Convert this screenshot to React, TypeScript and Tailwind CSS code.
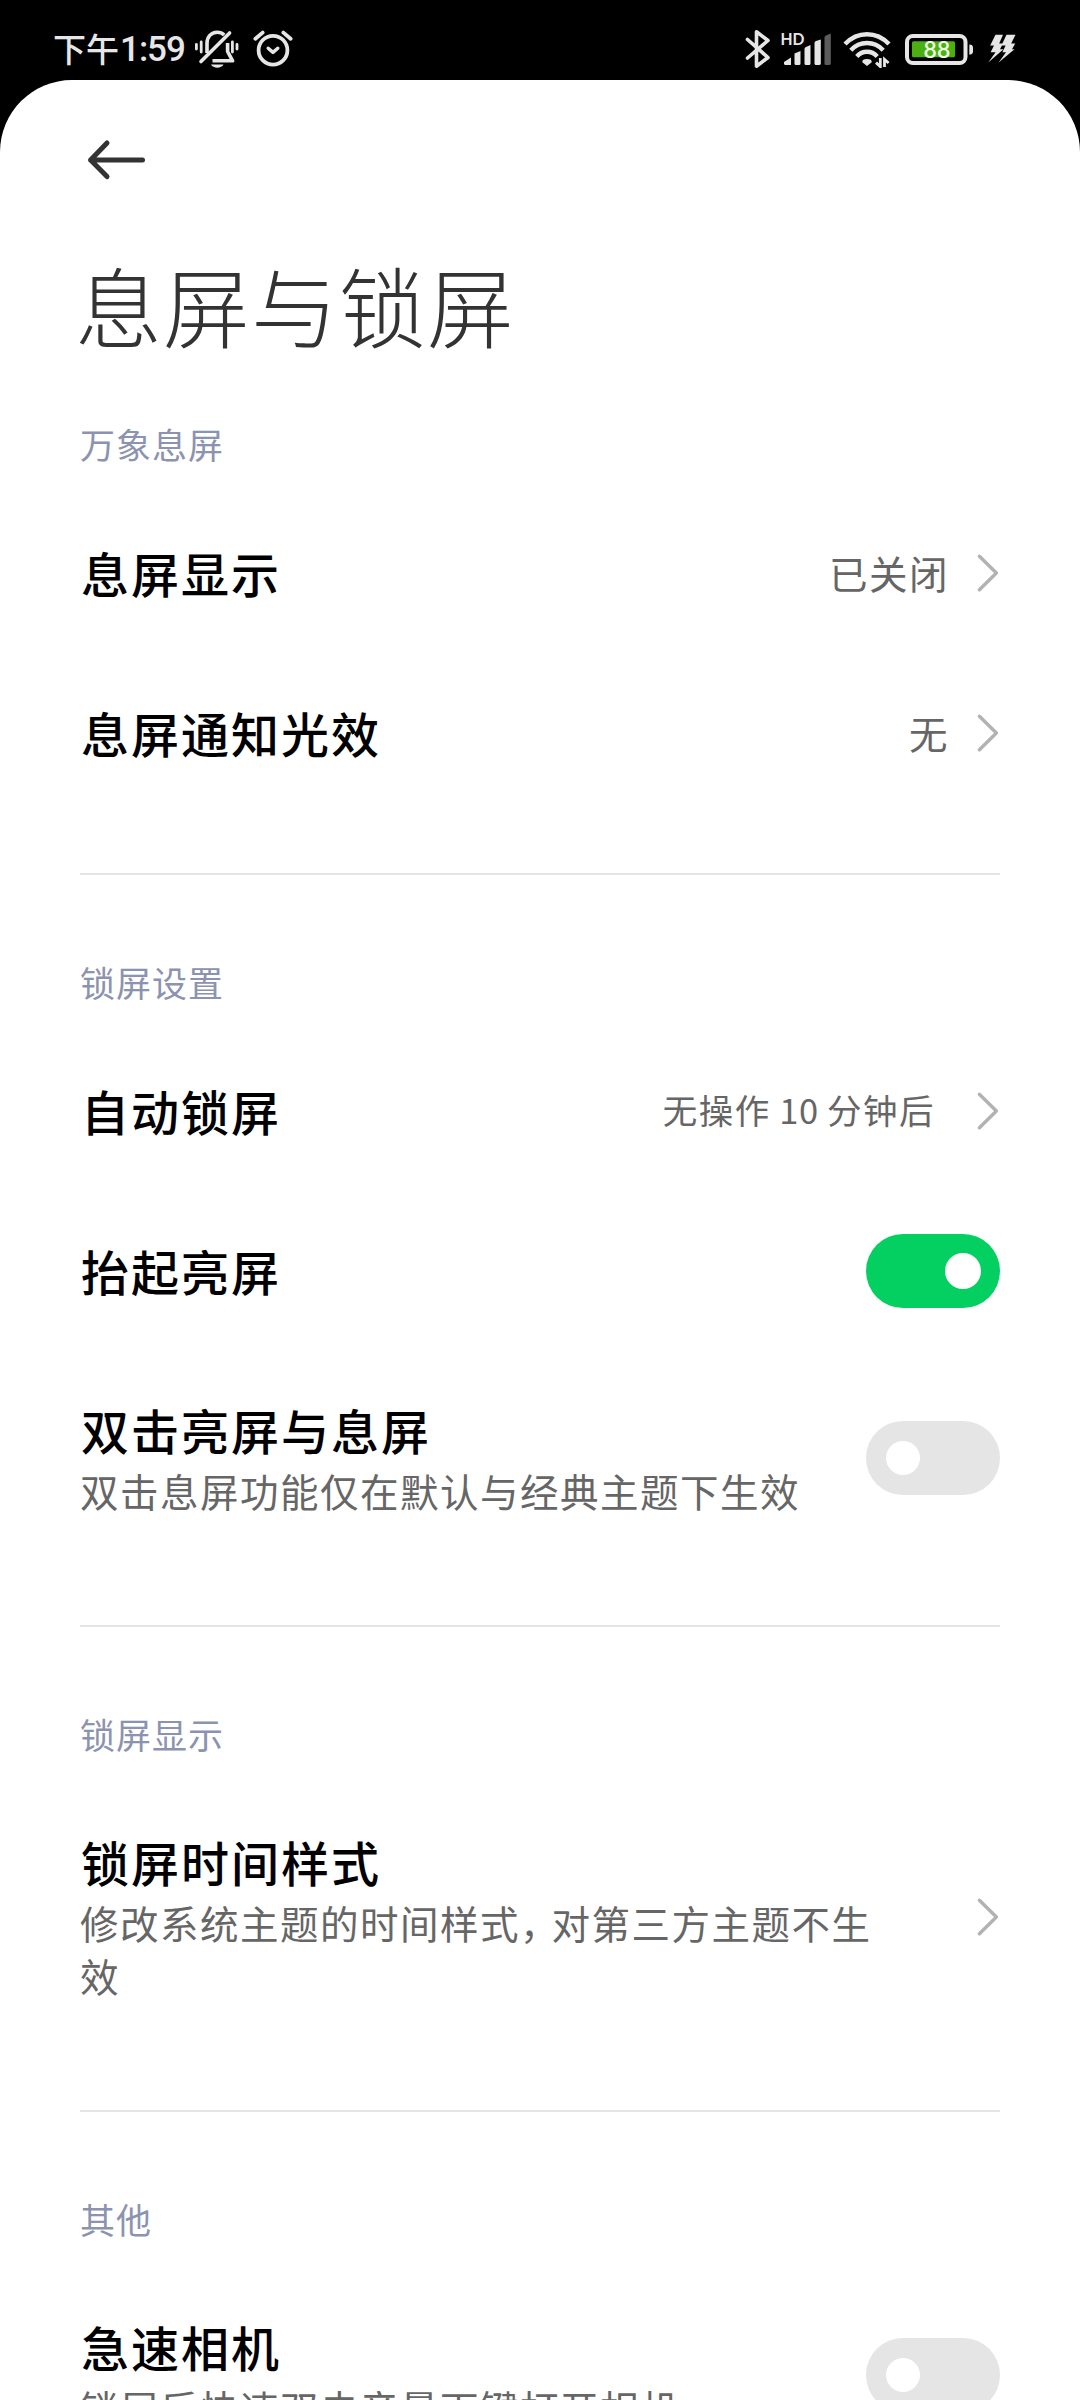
import type { ReactNode } from "react";

function BellOff() {
  return (
    <svg width="46" height="40" viewBox="0 0 46 40" fill="none" stroke="#e6e6e6" strokeWidth="3.6" strokeLinecap="round" className="shrink-0">
      <path d="M13 24V14.5C13 8 17 3.2 23.2 3.2C26.2 3.2 28.4 4.2 30.2 6" strokeLinecap="butt" />
      <path d="M35.6 4L7 32.5" />
      <path d="M33.6 14v8.5L38.6 31.8H18.5" strokeLinecap="butt" strokeLinejoin="round" />
      <path d="M17 35.6H29.5C27.5 39.8 19 39.8 17 35.6Z" fill="#e6e6e6" stroke="none" />
      <path d="M2.4 15.5v4.5M7.2 13v10M38.4 13v10M43 15.5v4.5" strokeWidth="2.8" />
    </svg>
  );
}

function Alarm() {
  return (
    <svg width="40" height="38" viewBox="0 0 40 38" fill="none" stroke="#e6e6e6" strokeLinecap="round" strokeLinejoin="round" className="shrink-0">
      <circle cx="20" cy="21.2" r="14.4" strokeWidth="3.8" />
      <path d="M2.4 9.8L9.6 3.6M37.6 9.8L30.4 3.6" strokeWidth="3.8" />
      <path d="M15.2 19.2L20 23.4L24.8 19.2" strokeWidth="3.4" />
    </svg>
  );
}

function Bluetooth() {
  return (
    <svg width="26" height="40" viewBox="0 0 26 40" fill="none" stroke="#e6e6e6" strokeWidth="3.6" strokeLinecap="round" strokeLinejoin="round" className="shrink-0">
      <path d="M2.5 10.5L23 28.5L11.5 37.2V2.8L23 11.5L2.5 29" />
    </svg>
  );
}

function Signal() {
  return (
    <svg width="52" height="34" viewBox="0 0 52 34" fill="#e6e6e6" className="shrink-0 overflow-visible">
      <text x="-0.5" y="13" fontSize="16.8" fontWeight="700" textLength="24" lengthAdjust="spacingAndGlyphs" fontFamily="Lato, sans-serif">HD</text>
      <path d="M3 30L10 25.5V33H4.5Q3 33 3 31.5Z" />
      <path d="M13.5 21.5L19.5 19V31.5Q19.5 33 18 33H15Q13.5 33 13.5 31.5Z" />
      <path d="M23.5 17Q23.5 15.6 25 15L29.5 13V31.5Q29.5 33 28 33H25Q23.5 33 23.5 31.5Z" />
      <path d="M33.5 11Q33.5 9.6 35 9L39.8 7.5V31.5Q39.8 33 38 33H35Q33.5 33 33.5 31.5Z" />
      <path d="M43.5 5.5Q43.5 4 45 3.4L49.8 1.5V31.5Q49.8 33 48 33H45Q43.5 33 43.5 31.5Z" fill="#5c5c5c" />
    </svg>
  );
}

function Wifi() {
  return (
    <svg width="48" height="38" viewBox="0 0 48 38" fill="none" stroke="#e6e6e6" strokeWidth="4.4" className="shrink-0">
      <path d="M2 14Q11.5 4.2 24 4.2T46 14" />
      <path d="M7.8 20.2Q14.5 13 24 13T40.2 20.2" />
      <path d="M13.8 26.4Q18 21.8 24 21.8T34.2 26.4" />
      <path d="M19.3 32.2Q19 29 24 29T28.7 32.2L24 36Z" fill="#e6e6e6" stroke="none" />
      <path d="M37.3 28V36.6L33 32.6M41.5 37V29.4L45.6 33" strokeWidth="2.8" />
    </svg>
  );
}

function Battery() {
  return (
    <svg width="70" height="32" viewBox="0 0 70 32" fill="none" className="shrink-0">
      <rect x="2" y="2" width="58.5" height="27" rx="6" stroke="#e6e6e6" strokeWidth="4" />
      <rect x="7" y="7.2" width="43" height="16" rx="1.5" fill="#4cb012" />
      <path d="M64.3 10.5Q68 10.5 68 13.5V17.5Q68 20.6 64.3 20.6Z" fill="#e6e6e6" />
      <text x="18.6" y="24.2" fontSize="23.4" fontWeight="600" textLength="26.6" lengthAdjust="spacingAndGlyphs" fill="#eefbe4" fontFamily="Lato, sans-serif">88</text>
    </svg>
  );
}

function Bolts() {
  return (
    <svg width="30" height="30" viewBox="0 0 30 30" fill="#e6e6e6" className="shrink-0">
      <path d="M8.5 0.8H16L12.2 9.6H16L13 15.2H16.5L1.2 28.6L8.6 18.2H3.6L7 11.6H3.2Z" />
      <path d="M19.5 0.8H28.5L24.2 9.6H28.2L25 15.2H27.5L11.6 28.6L19 18.2H15.4L18.6 11.6H14.4Z" />
    </svg>
  );
}

function Chevron() {
  return (
    <svg width="24" height="40" viewBox="0 0 24 40" fill="none" stroke="#b2b2b2" strokeWidth="3.4" strokeLinecap="round" strokeLinejoin="round" className="shrink-0">
      <path d="M3.4 3.2L20.4 20L3.4 36.8" />
    </svg>
  );
}

function Toggle({ on = false }: { on?: boolean }) {
  return on ? (
    <span role="switch" aria-checked="true" className="flex h-[74px] w-[134px] shrink-0 items-center justify-end rounded-full bg-[#04d062] pr-[19px]">
      <span className="size-9 rounded-full bg-white" />
    </span>
  ) : (
    <span role="switch" aria-checked="false" className="flex h-[74px] w-[134px] shrink-0 items-center rounded-full bg-[#e5e5e5] pl-5">
      <span className="size-[34px] rounded-full bg-white" />
    </span>
  );
}

function Section({ label, children }: { label: string; children: ReactNode }) {
  return (
    <section className="border-b-2 border-[#e5e5e5] pb-[60px] last:border-b-0">
      <h2 className="h-[156px] pt-[82px] text-[35px] leading-[50px] tracking-[1px] text-[#8c93b0]">{label}</h2>
      {children}
    </section>
  );
}

function Row({ title, note, value, children }: { title: string; note?: ReactNode; value?: ReactNode; children: ReactNode }) {
  return (
    <div className={note ? "flex items-center" : "flex h-40 items-center"}>
      <div className={note ? "min-w-0 flex-1 pt-[45px] pb-[48px]" : "min-w-0 flex-1 pb-[2px]"}>
        <h3 className="pl-[1px] text-[48px] leading-[67px] font-medium tracking-[2px] text-black">{title}</h3>
        {note && <p className="mt-[1px] max-w-[800px] text-[38.5px] leading-[53px] tracking-[1.5px] text-[#666]">{note}</p>}
      </div>
      {value}
      {children}
    </div>
  );
}

function Value({ children }: { children: ReactNode }) {
  return <span className="mr-[27px] pb-[1px] text-[38.5px] tracking-[1.5px] text-[#666]">{children}</span>;
}

export default function App() {
  return (
    <div className="h-[2400px] w-[1080px] overflow-hidden bg-black font-['Noto_Sans_CJK_SC',sans-serif]">
      <header className="flex h-20 items-start justify-between text-[#e6e6e6]">
        <div className="flex pt-[29px] pl-[53px]">
          <span className="flex h-10 w-[140px] items-center leading-10 font-medium whitespace-nowrap">
            <span className="w-[67px] pb-[2px] text-[33px]">下午</span>
            <span className="pt-[2px] font-['Roboto','Noto_Sans_CJK_SC',sans-serif] text-[35px] tracking-[-1px]">1:59</span>
          </span>
          <span className="ml-[1px]"><BellOff /></span>
          <span className="ml-[13px]"><Alarm /></span>
        </div>
        <div className="flex pt-[29px] pr-[63px]">
          <span className="mr-[10px]"><Bluetooth /></span>
          <span className="mt-[3px] mr-[10px]"><Signal /></span>
          <span className="mt-[1px] mr-[14px]"><Wifi /></span>
          <span className="mt-[5px] mr-[12px]"><Battery /></span>
          <span className="mt-[5px]"><Bolts /></span>
        </div>
      </header>

      <main className="h-[2320px] rounded-t-[72px] bg-white px-20">
        <nav className="flex h-40 items-center pl-[7px]">
          <svg width="60" height="42" viewBox="0 0 60 42" fill="none" stroke="#333" strokeWidth="5" strokeLinecap="round" strokeLinejoin="round">
            <path d="M20 4L3.6 21L20 37.6M3.6 21H55.5" />
          </svg>
        </nav>
        <h1 className="-ml-[5px] h-[97px] text-[87px] leading-[128px] font-light tracking-[1px] whitespace-nowrap text-[#333]">息屏与锁屏</h1>
        <Section label="万象息屏">
          <Row title="息屏显示" value={<Value>已关闭</Value>}><Chevron /></Row>
          <Row title="息屏通知光效" value={<Value>无</Value>}><Chevron /></Row>
        </Section>
        <Section label="锁屏设置">
          <Row
            title="自动锁屏"
            value={
              <span className="mr-[41px] pb-[2px] text-[34.5px] tracking-[1.5px] text-[#666]">
                无操作<span className="tracking-[0.6px]"> 10 </span>分钟后
              </span>
            }
          >
            <Chevron />
          </Row>
          <Row title="抬起亮屏"><Toggle on /></Row>
          <Row title="双击亮屏与息屏" note="双击息屏功能仅在默认与经典主题下生效"><Toggle /></Row>
        </Section>
        <Section label="锁屏显示">
          <Row title="锁屏时间样式" note={<>修改系统主题的时间样式<span className="tracking-[-7px]">，</span>对第三方主题不生效</>}><Chevron /></Row>
        </Section>
        <Section label="其他">
          <Row title="急速相机" note="锁屏后快速双击音量下键打开相机"><Toggle /></Row>
        </Section>
      </main>
    </div>
  );
}
